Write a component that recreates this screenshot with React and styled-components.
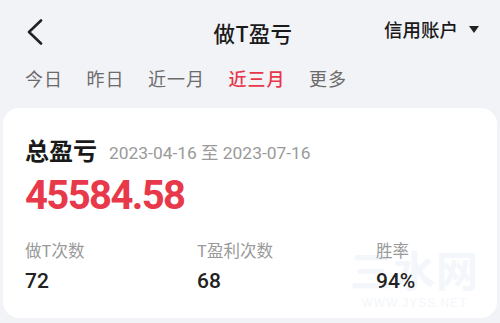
import React from "react";
import styled, { createGlobalStyle } from "styled-components";

const Global = createGlobalStyle`
  html, body { margin: 0; padding: 0; background: #f2f3f7; }
  body { font-family: "Noto Sans CJK SC", "Noto Sans", sans-serif; }
`;

const Page = styled.div`
  width: 500px;
  height: 323px;
  background: #f2f3f7;
  overflow: hidden;
  display: flex;
  flex-direction: column;
`;

const Header = styled.div`
  height: 64px;
  display: grid;
  grid-template-columns: 1fr auto 1fr;
  align-items: center;
  padding: 0 21px 0 27px;
`;

const Back = styled.svg`
  width: 16px;
  height: 26px;
  display: block;
`;

const Title = styled.div`
  font-size: 21.5px;
  font-weight: 500;
  color: #1a1a1a;
  letter-spacing: 0.3px;
`;

const Account = styled.div`
  justify-self: end;
  display: flex;
  align-items: center;
  gap: 11px;
  font-size: 18.5px;
  font-weight: 500;
  color: #1a1a1a;
  margin-top: -6px;
`;

const Tri = styled.svg`
  width: 10px;
  height: 7px;
  display: block;
`;

const Tabs = styled.div`
  height: 28px;
  display: flex;
  align-items: center;
  gap: 23.5px;
  padding: 0 25px;
`;

const Tab = styled.div`
  font-size: 18px;
  color: ${(p) => (p.$active ? "#e8374a" : "#6b6b6b")};
  font-weight: ${(p) => (p.$active ? 500 : 400)};
  letter-spacing: 1px;
`;

const Card = styled.div`
  position: relative;
  margin: 16px 3px 0;
  background: #fff;
  border-radius: 16px;
  padding: 25px 22px 23px;
  display: flex;
  flex-direction: column;
`;

const TitleRow = styled.div`
  height: 32px;
  display: flex;
  align-items: center;
  gap: 12px;
`;

const CardTitle = styled.div`
  font-size: 24px;
  font-weight: 700;
  color: #1a1a1a;
`;

const Range = styled.div`
  font-family: "Roboto", "Noto Sans CJK SC", sans-serif;
  font-size: 17.4px;
  color: #9a9a9a;
  margin-top: 4px;
`;

const Total = styled.div`
  font-family: "Roboto", "Noto Sans CJK SC", sans-serif;
  margin-top: 4px;
  height: 54px;
  line-height: 54px;
  font-size: 40px;
  font-weight: 700;
  color: #e8394a;
  letter-spacing: -1.6px;
`;

const Stats = styled.div`
  margin-top: 16px;
  display: grid;
  grid-template-columns: 172px 179px 1fr;
  position: relative;
  z-index: 1;
`;

const Stat = styled.div`
  display: flex;
  flex-direction: column;
  gap: 6px;
`;

const Label = styled.div`
  height: 22px;
  line-height: 22px;
  font-size: 16.5px;
  color: #9a9a9a;
`;

const Value = styled.div`
  font-family: "Roboto", "Noto Sans CJK SC", sans-serif;
  height: 28px;
  line-height: 28px;
  font-size: 21px;
  font-weight: 500;
  color: #222;
`;

const Watermark = styled.div`
  position: absolute;
  right: 18px;
  bottom: 8px;
  display: flex;
  flex-direction: column;
  align-items: center;
  color: #f3f6fa;
  font-weight: 700;
  pointer-events: none;
`;

const WmBig = styled.div`
  font-size: 42px;
  line-height: 54px;
  letter-spacing: 1px;
`;

const WmSmall = styled.div`
  font-family: "Liberation Sans", sans-serif;
  font-size: 12px;
  font-weight: 400;
  letter-spacing: 1px;
`;

const stats = [
  { label: "做T次数", value: "72" },
  { label: "T盈利次数", value: "68" },
  { label: "胜率", value: "94%" },
];

export default function App() {
  return (
    <Page>
      <Global />
      <Header>
        <Back viewBox="0 0 16 26">
          <path d="M14 1.5 L2 13 L14 24.5" fill="none" stroke="#222" strokeWidth="2.6" strokeLinecap="round" strokeLinejoin="round" />
        </Back>
        <Title>做T盈亏</Title>
        <Account>
          信用账户
          <Tri viewBox="0 0 10 7">
            <path d="M0 0 H10 L5 7 Z" fill="#222" />
          </Tri>
        </Account>
      </Header>
      <Tabs>
        <Tab>今日</Tab>
        <Tab>昨日</Tab>
        <Tab>近一月</Tab>
        <Tab $active>近三月</Tab>
        <Tab>更多</Tab>
      </Tabs>
      <Card>
        <Watermark>
          <WmBig>三水网</WmBig>
          <WmSmall>WWW.JYSS.NET</WmSmall>
        </Watermark>
        <TitleRow>
          <CardTitle>总盈亏</CardTitle>
          <Range>2023-04-16 至 2023-07-16</Range>
        </TitleRow>
        <Total>45584.58</Total>
        <Stats>
          {stats.map((s) => (
            <Stat key={s.label}>
              <Label>{s.label}</Label>
              <Value>{s.value}</Value>
            </Stat>
          ))}
        </Stats>
      </Card>
    </Page>
  );
}
